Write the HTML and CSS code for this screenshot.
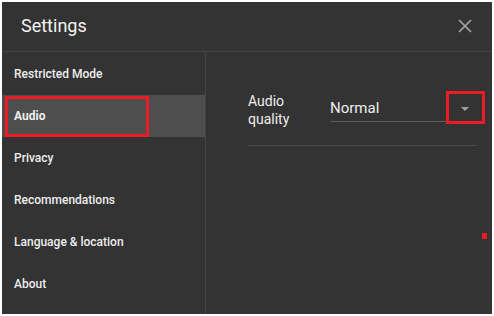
FILE: index.html
```html
<!DOCTYPE html>
<html lang="en">
<head>
<meta charset="UTF-8">
<meta name="viewport" content="width=device-width, initial-scale=1.0">
<title>Settings</title>
<link rel="stylesheet" href="styles.css">
</head>
<body>

<div class="dialog">
    <!-- Header -->
    <div class="header">
        <div class="title">Settings</div>
        <svg class="close" width="14" height="14" viewBox="0 0 14 14">
            <path d="M1 1 L13 13 M13 1 L1 13" stroke="#a8a8a8" stroke-width="1.6" fill="none"/>
        </svg>
    </div>

    <div class="main">
        <!-- Left menu -->
        <div class="sidebar">
            <div class="item">Restricted Mode</div>
            <div class="item active">Audio<span class="mark mark-audio"></span></div>
            <div class="item">Privacy</div>
            <div class="item">Recommendations</div>
            <div class="item">Language &amp; location</div>
            <div class="item">About</div>
        </div>

        <!-- Right panel -->
        <div class="panel">
            <div class="setting">
                <div class="label">Audio<br>quality</div>
                <div class="select">
                    <span class="value">Normal</span>
                    <span class="arrow"></span>
                    <span class="mark mark-arrow"></span>
                </div>
            </div>
            <div class="divider"></div>
            <span class="dot"></span>
        </div>
    </div>
</div>

</body>
</html>
```

FILE: styles.css
```css
body {
    margin: 0;
    padding: 0;
    background-color: #fff;
    font-family: Roboto, "Liberation Sans", Arial, sans-serif;
}
.dialog {
    margin: 2px 2px 2px 2px;
    width: 490px;
    height: 312px;
    background-color: #333333;
    display: flex;
    flex-direction: column;
}
.header {
    height: 49px;
    border-bottom: 1px solid #444444;
    display: flex;
    align-items: center;
    justify-content: space-between;
    padding: 0 20px 0 19px;
}
.title {
    color: #f2f2f2;
    font-size: 18px;
    margin-top: -2px;
}
.close {
    margin-top: -2px;
}
.main {
    flex: 1;
    display: flex;
}
.sidebar {
    width: 203px;
    border-right: 1px solid #444444;
    padding-top: 1px;
}
.item {
    position: relative;
    height: 42px;
    line-height: 42px;
    padding-left: 12px;
    color: #eeeeee;
    font-size: 12px;
    font-weight: 500;
}
.item.active {
    background-color: #4e4e4e;
    font-weight: 700;
}
.mark {
    position: absolute;
    border: 3px solid #ec1c24;
    box-sizing: border-box;
}
.mark-audio {
    left: 3px;
    top: 1px;
    width: 144px;
    height: 41px;
}
.panel {
    position: relative;
    flex: 1;
    padding: 32px 15px 0 42px;
}
.setting {
    display: flex;
    align-items: center;
    height: 52px;
}
.label {
    width: 82px;
    color: #eeeeee;
    font-size: 14px;
    line-height: 18px;
}
.select {
    position: relative;
    flex: 1;
    height: 25px;
    border-bottom: 1px solid #5c5c5c;
    display: flex;
    align-items: center;
    justify-content: space-between;
    margin-top: -3px;
}
.value {
    color: #eeeeee;
    font-size: 15px;
}
.arrow {
    width: 0;
    height: 0;
    border-left: 4px solid transparent;
    border-right: 4px solid transparent;
    border-top: 4px solid #a0a0a0;
    margin-right: 8px;
    margin-top: 1px;
}
.mark-arrow {
    right: -8px;
    top: -5px;
    width: 39px;
    height: 33px;
}
.divider {
    margin-top: 9px;
    height: 1px;
    background-color: #4a4a4a;
}
.dot {
    position: absolute;
    right: 5px;
    top: 181px;
    width: 5px;
    height: 6px;
    background-color: #ec1c24;
}
```
